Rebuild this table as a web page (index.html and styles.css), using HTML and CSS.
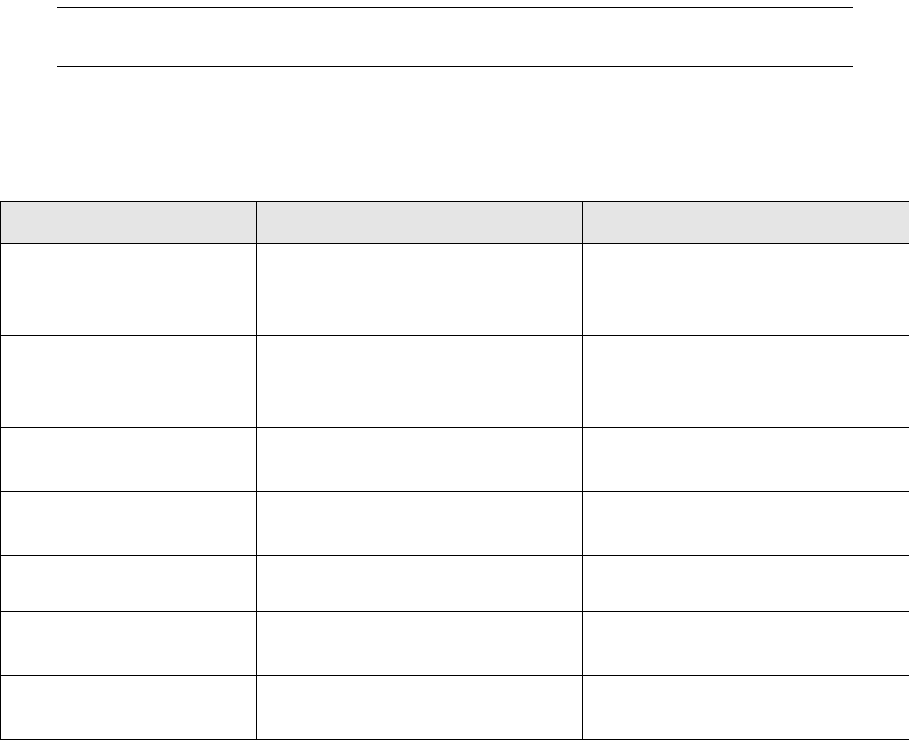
FILE: index.html
```html
<!DOCTYPE html>
<html>
<head>
<meta charset="utf-8">
<link rel="stylesheet" href="styles.css">
</head>
<body>
<div class="rule"></div>
<table class="grid">
  <colgroup><col class="c1"><col class="c2"><col class="c3"></colgroup>
  <thead>
    <tr class="head"><th></th><th></th><th></th></tr>
  </thead>
  <tbody>
    <tr class="tall"><td></td><td></td><td></td></tr>
    <tr class="tall"><td></td><td></td><td></td></tr>
    <tr class="mid"><td></td><td></td><td></td></tr>
    <tr class="mid"><td></td><td></td><td></td></tr>
    <tr class="short"><td></td><td></td><td></td></tr>
    <tr class="mid"><td></td><td></td><td></td></tr>
    <tr class="mid"><td></td><td></td><td></td></tr>
  </tbody>
</table>
</body>
</html>
```
FILE: styles.css
```css
html, body {
  margin: 0;
  padding: 0;
  background: #fff;
  font-family: "Liberation Sans", Arial, sans-serif;
}
.rule {
  margin: 7px 56px 0 57px;
  height: 58px;
  border-top: 1px solid #000;
  border-bottom: 1px solid #000;
}
.grid {
  margin-top: 134px;
  width: 909px;
  border-collapse: collapse;
  table-layout: fixed;
}
.c1 { width: 256px; }
.c2 { width: 326px; }
.c3 { width: 327px; }
.grid th, .grid td {
  border: 1px solid #000;
  padding: 0;
}
.grid th { background: #e5e5e5; }
.head { height: 42px; }
.tall { height: 92px; }
.mid { height: 64px; }
.short { height: 56px; }
```
